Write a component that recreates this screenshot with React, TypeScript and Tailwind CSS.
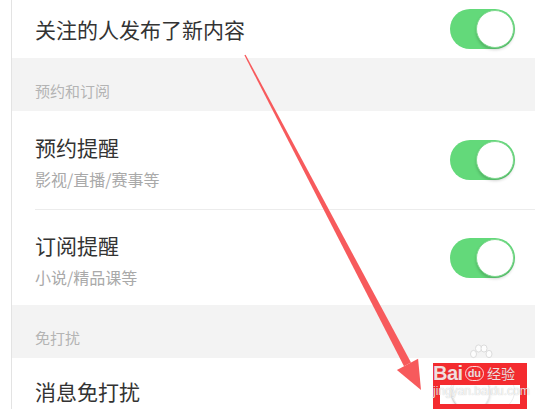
import React from "react";

const Toggle = ({ on = true }: { on?: boolean }) => (
  <div
    className={`relative h-[40px] w-[65px] shrink-0 rounded-full ${
      on ? "bg-[#63d97a]" : "border border-[#ececec] bg-white"
    }`}
  >
    <div
      className={`absolute top-[1px] h-[38px] w-[38px] rounded-full border bg-white shadow-[0_2px_3px_rgba(0,0,0,0.18)] ${
        on ? "right-[1px] border-[#7fd98f]" : "left-[1px] border-[#efefef]"
      }`}
    />
  </div>
);

const SectionHeader = ({ label }: { label: string }) => (
  <div className="flex h-[53px] items-end bg-[#f3f3f3] pb-[9px] pl-[23px] text-[15px] leading-[22px] text-[#b4b4b4]">
    {label}
  </div>
);

const Row = ({
  title,
  sub,
  on = true,
  className = "",
}: {
  title: string;
  sub?: string;
  on?: boolean;
  className?: string;
}) => (
  <div className={`flex items-center pl-[23px] pr-[20px] ${className}`}>
    <div className={`flex flex-1 flex-col ${sub ? "pt-[3px]" : ""}`}>
      <span className="text-[21px] leading-[28px] text-[#333333]">{title}</span>
      {sub && (
        <span className="mt-[7px] text-[16px] leading-[22px] text-[#a9a9a9]">
          {sub}
        </span>
      )}
    </div>
    <Toggle on={on} />
  </div>
);

export default function App() {
  return (
    <div className="relative h-[409px] w-[560px] overflow-hidden bg-white font-['Noto_Sans_CJK_SC',sans-serif]">
      <div className="ml-[11px] h-full w-[524px] border-l border-[#e3e3e3]">
        <Row title="关注的人发布了新内容" className="h-[58px]" />
        <SectionHeader label="预约和订阅" />
        <Row title="预约提醒" sub="影视/直播/赛事等" className="h-[98px]" />
        <div className="ml-[23px] h-px bg-[#ececec]" />
        <Row title="订阅提醒" sub="小说/精品课等" className="h-[95px]" />
        <SectionHeader label="免打扰" />
        <Row title="消息免打扰" on={false} className="h-[66px]" />
      </div>

      {/* annotation arrow */}
      <svg
        className="pointer-events-none absolute left-0 top-0"
        width="560"
        height="409"
        viewBox="0 0 560 409"
      >
        <polygon
          points="245.6,54.7 244.4,55.3 404,366.2 411,362.4"
          fill="#f75a5c"
        />
        <polygon points="396.9,369.9 418.1,358.7 421,390" fill="#f75a5c" />
      </svg>

      {/* highlight box */}
      <div className="absolute left-[433px] top-[363px] h-[46px] w-[94px] border-x-[7px] border-b-[5px] border-t-[22px] border-[#f42b2f]" />

      {/* watermark */}
      <div className="pointer-events-none absolute left-[433px] top-[344px] flex w-[96px] flex-col whitespace-nowrap text-white/85 [text-shadow:0_0_1px_rgba(0,0,0,0.3)]">
        <svg className="ml-[36px] h-[19px]" width="24" height="19" viewBox="0 0 24 19">
          <g fill="#ffffff" fillOpacity="0.8" stroke="#d4d4d4" strokeWidth="0.8">
            <ellipse cx="4.5" cy="10" rx="3" ry="3.6" />
            <ellipse cx="9.5" cy="4.5" rx="3" ry="3.6" />
            <ellipse cx="15" cy="4.5" rx="3" ry="3.6" />
            <ellipse cx="20" cy="10" rx="3" ry="3.6" />
          </g>
        </svg>
        <div className="flex h-[20px] items-center font-['Liberation_Sans',sans-serif]">
          <span className="text-[20px] font-bold leading-[20px] tracking-[-0.5px]">Bai</span>
          <span className="ml-[2px] rounded-full border border-white/80 px-[2px] text-[11px] font-bold leading-[13px]">
            du
          </span>
          <span className="ml-[3px] font-['Noto_Sans_CJK_SC',sans-serif] text-[14px] leading-[18px]">
            经验
          </span>
        </div>
        <span className="mt-[2px] font-['Liberation_Sans',sans-serif] text-[12px] leading-[12px]">
          jingyan.baidu.com
        </span>
      </div>
    </div>
  );
}
